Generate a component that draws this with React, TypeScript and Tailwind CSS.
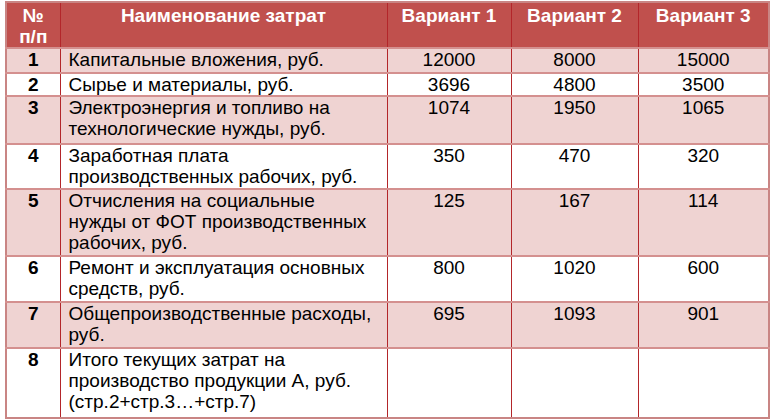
const rows = [
  { n: "1", name: ["Капитальные вложения, руб."], v: ["12000", "8000", "15000"], h: "h-[25px]", band: true },
  { n: "2", name: ["Сырье и материалы, руб."], v: ["3696", "4800", "3500"], h: "h-[21px]", band: false },
  { n: "3", name: ["Электроэнергия и топливо на", "технологические нужды, руб."], v: ["1074", "1950", "1065"], h: "h-[48px]", band: true },
  { n: "4", name: ["Заработная плата", "производственных рабочих, руб."], v: ["350", "470", "320"], h: "h-[45px]", band: false },
  { n: "5", name: ["Отчисления на социальные", "нужды от ФОТ производственных", "рабочих, руб."], v: ["125", "167", "114"], h: "h-[67px]", band: true },
  { n: "6", name: ["Ремонт и эксплуатация основных", "средств, руб."], v: ["800", "1020", "600"], h: "h-[46px]", band: false },
  { n: "7", name: ["Общепроизводственные расходы,", "руб."], v: ["695", "1093", "901"], h: "h-[46px]", band: true },
  { n: "8", name: ["Итого текущих затрат на", "производство продукции А, руб.", "(стр.2+стр.3…+стр.7)"], v: ["", "", ""], h: "h-[70px]", band: false },
]

export default function App() {
  return (
    <div className="w-[772px] h-[420px] bg-white pl-[5px] pt-[1px] font-['Liberation_Sans',Arial,sans-serif]">
      <table className="table-fixed border-collapse border-2 border-[#c98584] text-[19px] leading-[21px] text-black">
        <colgroup>
          <col className="w-[54px]" />
          <col className="w-[327px]" />
          <col className="w-[124px]" />
          <col className="w-[127px]" />
          <col className="w-[131px]" />
        </colgroup>
        <thead>
          <tr className="h-[46px] bg-[#c0504d] text-white font-bold">
            <th className="align-top pt-[2px] text-center border-r border-[#b3262a]">
              №<br />п/п
            </th>
            <th className="align-top pt-[2px] text-center border-r border-[#b3262a]">Наименование затрат</th>
            <th className="align-top pt-[2px] text-center border-r border-[#b3262a]">Вариант 1</th>
            <th className="align-top pt-[2px] text-center border-r border-[#b3262a]">Вариант 2</th>
            <th className="align-top pt-[2px] text-center">Вариант 3</th>
          </tr>
        </thead>
        <tbody>
          {rows.map((r) => (
            <tr key={r.n} className={`${r.h} ${r.band ? "bg-[#efd3d2]" : "bg-white"} border-t-2 border-[#d4908f]`}>
              <td className="align-top text-center font-bold border-r border-[#b3262a]">{r.n}</td>
              <td className="align-top pl-[8px] border-r border-[#b3262a] whitespace-nowrap">
                {r.name.map((line, i) => (
                  <div key={i}>{line}</div>
                ))}
              </td>
              {r.v.map((val, i) => (
                <td key={i} className={`align-top text-center ${i < 2 ? "border-r border-[#b3262a]" : ""}`}>
                  {val}
                </td>
              ))}
            </tr>
          ))}
        </tbody>
      </table>
    </div>
  )
}
